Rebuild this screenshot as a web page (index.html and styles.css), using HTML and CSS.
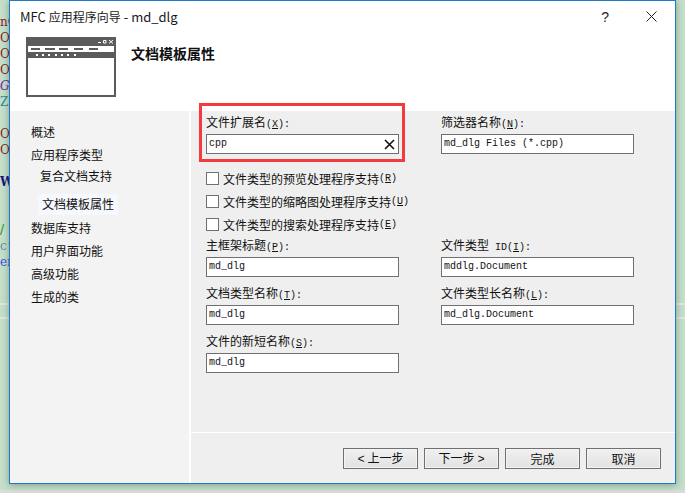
FILE: index.html
```html
<!DOCTYPE html>
<html lang="zh-CN">
<head>
  <meta charset="UTF-8">
  <title>MFC 应用程序向导 - md_dlg</title>
  <link rel="stylesheet" href="styles.css">
</head>
<body>

<div class="code-strip">
  <div class="code-line red">nO</div>
  <div class="code-line red">Or</div>
  <div class="code-line red">Or</div>
  <div class="code-line red">Or</div>
  <div class="code-line purple">G</div>
  <div class="code-line teal">Z</div>
  <div class="code-line"></div>
  <div class="code-line red">Or</div>
  <div class="code-line red">Or</div>
  <div class="code-line"></div>
  <div class="code-line navy">Wr</div>
  <div class="code-line"></div>
  <div class="code-line"></div>
  <div class="code-line green">/</div>
  <div class="code-line gray">c^</div>
  <div class="code-line blue">er</div>
</div>

<div class="dialog">
  <div class="titlebar">
    <span class="title"><span class="title-latin">MFC </span>应用程序向导<span class="title-latin"> - md_dlg</span></span>
    <span class="help">?</span>
    <svg class="close" width="11" height="11" viewBox="0 0 11 11">
      <path d="M0.5 0.5L10.5 10.5M10.5 0.5L0.5 10.5" stroke="#222" stroke-width="1" fill="none"/>
    </svg>
  </div>

  <div class="header">
    <svg class="wizard-icon" width="90" height="60" viewBox="0 0 90 60">
      <rect x="0" y="0" width="90" height="60" fill="#5b5b5b"/>
      <rect x="2" y="9" width="86" height="49" fill="#fff"/>
      <rect x="2" y="15" width="86" height="6" fill="#5b5b5b"/>
      <path d="M5 12h9M19 12h10M33 12h9M48 12h9M63 12h9" stroke="#5b5b5b" stroke-width="2"/>
      <path d="M10 18h2M16 18h2M22 18h2M29 18h2M35 18h2M41 18h2M48 18h2" stroke="#fff" stroke-width="2"/>
      <path d="M72 5.500h3M77.500 3.500h2.500v2.500h-2.500zM83 3l4 3.500M87 3l-4 3.500" stroke="#fff" stroke-width="1" fill="none"/>
    </svg>
    <h1 class="page-title">文档模板属性</h1>
  </div>

  <div class="body">
    <div class="sidebar">
      <div class="nav-item">概述</div>
      <div class="nav-item">应用程序类型</div>
      <div class="nav-item nav-sub">复合文档支持</div>
      <div class="nav-item nav-active">文档模板属性</div>
      <div class="nav-item">数据库支持</div>
      <div class="nav-item">用户界面功能</div>
      <div class="nav-item">高级功能</div>
      <div class="nav-item">生成的类</div>
    </div>

    <div class="content">
      <div class="form">
        <div class="form-row">
          <div class="field">
            <div class="red-box"></div>
            <label class="field-label">文件扩展名<span class="key">(<u>X</u>):</span></label>
            <div class="input">cpp
              <svg class="clear" width="11" height="11" viewBox="0 0 11 11">
                <path d="M1 1L10 10M10 1L1 10" stroke="#111" stroke-width="1.600" fill="none"/>
              </svg>
            </div>
          </div>
          <div class="field">
            <label class="field-label">筛选器名称<span class="key">(<u>N</u>):</span></label>
            <div class="input">md_dlg Files (*.cpp)</div>
          </div>
        </div>

        <div class="checks">
          <div class="check"><span class="box"></span>文件类型的预览处理程序支持<span class="key">(<u>R</u>)</span></div>
          <div class="check"><span class="box"></span>文件类型的缩略图处理程序支持<span class="key">(<u>U</u>)</span></div>
          <div class="check"><span class="box"></span>文件类型的搜索处理程序支持<span class="key">(<u>E</u>)</span></div>
        </div>

        <div class="form-row">
          <div class="field">
            <label class="field-label">主框架标题<span class="key">(<u>P</u>):</span></label>
            <div class="input">md_dlg</div>
          </div>
          <div class="field">
            <label class="field-label">文件类型<span class="key"> ID(<u>I</u>):</span></label>
            <div class="input">mddlg.Document</div>
          </div>
        </div>

        <div class="form-row">
          <div class="field">
            <label class="field-label">文档类型名称<span class="key">(<u>T</u>):</span></label>
            <div class="input">md_dlg</div>
          </div>
          <div class="field">
            <label class="field-label">文件类型长名称<span class="key">(<u>L</u>):</span></label>
            <div class="input">md_dlg.Document</div>
          </div>
        </div>

        <div class="form-row">
          <div class="field">
            <label class="field-label">文件的新短名称<span class="key">(<u>S</u>):</span></label>
            <div class="input">md_dlg</div>
          </div>
        </div>
      </div>

      <div class="footer">
        <button class="btn"><span class="arrow-left">&lt;</span>上一步</button>
        <button class="btn">下一步<span class="arrow-right">&gt;</span></button>
        <button class="btn">完成</button>
        <button class="btn">取消</button>
      </div>
    </div>
  </div>
</div>

</body>
</html>
```

FILE: styles.css
```css
body {
  margin: 0;
  height: 493px;
  overflow: hidden;
  display: flex;
  align-items: flex-start;
  font-family: "Noto Sans CJK SC", sans-serif;
  font-size: 12px;
  color: #111;
  background:
    linear-gradient(#d8ddd9, #d8ddd9) 0 490px / 100% 3px no-repeat,
    linear-gradient(#e4e6e4, #e4e6e4) 0 303px / 100% 2px no-repeat,
    linear-gradient(#e4e6e4, #e4e6e4) 0 317px / 100% 2px no-repeat,
    #c5dfcb;
}

/* editor text peeking out behind the dialog */
.code-strip {
  width: 9px;
  flex: none;
  overflow: hidden;
  padding-top: 14px;
  font-family: "DejaVu Serif", serif;
  font-size: 12px;
}

.code-line {
  height: 16px;
  line-height: 16px;
  white-space: nowrap;
}

.red { color: #8b1a2b; }
.purple { color: #7a1fa2; font-style: italic; }
.teal { color: #2b8a9a; }
.navy { color: #14147a; font-weight: bold; }
.green { color: #108a10; }
.gray { color: #5f8f9f; }
.blue { color: #3a4fe0; }

.dialog {
  width: 667px;
  height: 484px;
  flex: none;
  box-sizing: border-box;
  border: 1px solid #1f79c9;
  display: flex;
  flex-direction: column;
  position: relative;
  background-color: #fff;
  box-shadow: 0 1px 7px rgba(40, 70, 50, 0.45);
}

.titlebar {
  height: 30px;
  display: flex;
  align-items: center;
  padding-top: 1px;
  box-sizing: border-box;
  padding-left: 10px;
  flex: none;
}

.title {
  font-size: 12px;
  color: #1a1a1a;
  flex: 1;
  white-space: pre;
}

.title-latin {
  font-size: 13px;
}

.help {
  font-family: "Liberation Sans", sans-serif;
  font-size: 14px;
  color: #222;
  margin-right: 37px;
}

.close {
  margin-right: 18px;
}

.header {
  height: 80px;
  flex: none;
  display: flex;
  align-items: flex-start;
  padding: 6px 0 0 16px;
  box-sizing: border-box;
}

.page-title {
  margin: 5px 0 0 15px;
  font-size: 14px;
  line-height: 22px;
  font-weight: bold;
  color: #111;
}

.body {
  flex: 1;
  display: flex;
  min-height: 0;
}

.sidebar {
  width: 179px;
  flex: none;
  background-color: #f3f3f3;
  border-right: 2px solid #fff;
  padding-top: 9px;
}

.nav-item {
  height: 23px;
  line-height: 23px;
  padding-left: 21px;
}

.nav-sub {
  height: 20px;
  line-height: 20px;
  padding-left: 30px;
  margin-bottom: 8px;
}

.nav-active {
  height: 21px;
  line-height: 19px;
  width: 76px;
  margin: 0 0 1px 28px;
  padding-left: 4px;
  background-color: #f5f8fd;
}

.content {
  flex: 1;
  display: flex;
  flex-direction: column;
  background-color: #efefef;
}

.form {
  flex: 1;
  padding: 3px 0 0 15px;
}

.form-row {
  display: grid;
  grid-template-columns: 193px 193px;
  column-gap: 42px;
  margin-bottom: 8px;
}

.field {
  position: relative;
}

.field-label {
  display: block;
  height: 16px;
  line-height: 16px;
  margin-bottom: 4px;
  white-space: pre;
}

.key {
  font-family: "Liberation Mono", monospace;
  font-size: 10px;
}

.input {
  height: 20px;
  box-sizing: border-box;
  border: 1px solid #707070;
  background-color: #fff;
  padding-left: 2px;
  line-height: 16px;
  font-family: "Liberation Mono", monospace;
  font-size: 10px;
  color: #111;
  display: flex;
  align-items: center;
  justify-content: space-between;
}

.clear {
  margin-right: 3px;
}

/* annotation drawn on top of the screenshot */
.red-box {
  position: absolute;
  left: -7px;
  top: -11px;
  width: 206px;
  height: 59px;
  box-sizing: border-box;
  border: 3px solid #f43a3a;
}

.checks {
  padding-top: 8px;
  margin-bottom: 4px;
}

.check {
  display: flex;
  align-items: center;
  height: 17px;
  margin-bottom: 6px;
  white-space: pre;
}

.check:last-child {
  margin-bottom: 0;
}

.box {
  width: 13px;
  height: 13px;
  box-sizing: border-box;
  border: 1px solid #707070;
  background-color: #fff;
  margin-right: 4px;
  flex: none;
}

.footer {
  height: 51px;
  flex: none;
  box-sizing: border-box;
  border-top: 1px solid #fff;
  display: flex;
  justify-content: flex-end;
  gap: 6px;
  padding: 15px 14px 0 0;
}

.btn {
  width: 75px;
  height: 21px;
  padding: 0;
  border: 1px solid #707070;
  background: linear-gradient(#f0f0f0, #e2e2e2);
  box-shadow: inset 0 0 0 1px #f4f4f4;
  font-family: "Noto Sans CJK SC", sans-serif;
  font-size: 12px;
  line-height: 17px;
  color: #111;
}

.arrow-left {
  font-family: "Liberation Mono", monospace;
  margin-right: 3px;
}

.arrow-right {
  font-family: "Liberation Mono", monospace;
  margin-left: 3px;
}
```
